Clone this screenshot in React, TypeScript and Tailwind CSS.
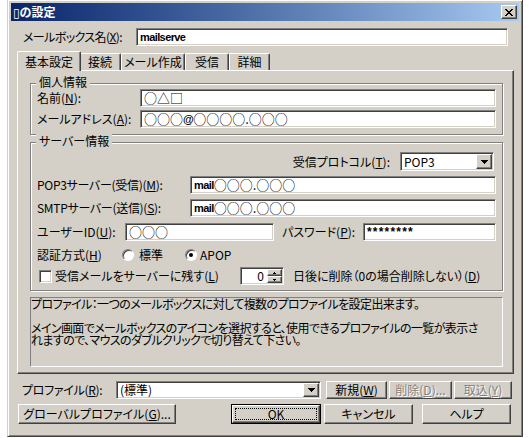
import React from "react";

const raised =
  "border border-t-white border-l-white border-r-[#404040] border-b-[#404040] shadow-[inset_-1px_-1px_0_#808080] bg-[#d4d0c8]";
const sunken =
  "border border-t-[#808080] border-l-[#808080] border-r-white border-b-white shadow-[inset_1px_1px_0_#404040,inset_-1px_-1px_0_#d4d0c8]";

function U({ children }: { children: React.ReactNode }) {
  return <span className="underline underline-offset-1">{children}</span>;
}

function DownArrow() {
  return (
    <svg width="7" height="4" viewBox="0 0 7 4" shapeRendering="crispEdges">
      <path d="M0 0h7v1H0zM1 1h5v1H1zM2 2h3v1H2zM3 3h1v1H3z" fill="#000" />
    </svg>
  );
}

function CloseGlyph() {
  return (
    <svg width="8" height="7" viewBox="0 0 8 7" shapeRendering="crispEdges">
      <path
        d="M0 0h2v1H0zM6 0h2v1H6zM1 1h2v1H1zM5 1h2v1H5zM2 2h4v1H2zM3 3h2v1H3zM2 4h4v1H2zM1 5h2v1H1zM5 5h2v1H5zM0 6h2v1H0zM6 6h2v1H6z"
        fill="#000"
      />
    </svg>
  );
}

function TextBox({ w, children }: { w: string; children?: React.ReactNode }) {
  return (
    <div className={`${sunken} ${w} h-[18px] bg-white flex items-center pl-[3px] whitespace-nowrap overflow-hidden leading-[14px]`}>
      {children}
    </div>
  );
}

function Combo({ w, h, children }: { w: string; h: string; children: React.ReactNode }) {
  return (
    <div className={`${sunken} ${w} ${h} bg-white flex items-center p-px`}>
      <span className="flex-1 pl-[2px] whitespace-nowrap leading-[14px]">{children}</span>
      <div className={`${raised} w-[16px] h-full flex items-center justify-center`}>
        <DownArrow />
      </div>
    </div>
  );
}

function Btn({
  w,
  h,
  children,
  disabled,
}: {
  w: string;
  h: string;
  children: React.ReactNode;
  disabled?: boolean;
}) {
  return (
    <div className={`${raised} ${w} ${h} flex items-center justify-center whitespace-nowrap leading-[14px]`}>
      <span className={disabled ? "text-[#808080] [text-shadow:1px_1px_0_#fff]" : ""}>{children}</span>
    </div>
  );
}

function Group({ title, className, children }: { title: string; className: string; children: React.ReactNode }) {
  return (
    <div className={`relative border border-[#808080] shadow-[inset_1px_1px_0_#fff,1px_1px_0_#fff] ${className}`}>
      <span className="absolute left-[5px] top-[-9px] px-[3px] bg-[#d4d0c8] leading-[14px]">{title}</span>
      {children}
    </div>
  );
}

function Radio({ checked }: { checked?: boolean }) {
  return (
    <div className="w-[12px] h-[12px] rounded-full bg-white border border-t-[#808080] border-l-[#808080] border-r-white border-b-white shadow-[inset_1px_1px_0_#404040] flex items-center justify-center">
      {checked && <div className="w-[4px] h-[4px] rounded-full bg-black" />}
    </div>
  );
}

function SpinArrow({ up }: { up?: boolean }) {
  return (
    <svg width="3" height="2" viewBox="0 0 3 2" shapeRendering="crispEdges">
      <path d={up ? "M1 0h1v1H1zM0 1h3v1H0z" : "M0 0h3v1H0zM1 1h1v1H1z"} fill="#000" />
    </svg>
  );
}

const sym = "text-[13px] [font-feature-settings:normal]";
const narrow = "font-['Liberation_Sans',sans-serif] font-bold text-[11px] tracking-[-0.6px]";

const tabs = [
  { label: "基本設定", w: "w-[64px]", sel: true },
  { label: "接続", w: "w-[42px]" },
  { label: "メール作成", w: "w-[64px]" },
  { label: "受信", w: "w-[44px]" },
  { label: "詳細", w: "w-[41px]" },
];

export default function App() {
  return (
    <div className="w-[530px] h-[438px] bg-white overflow-hidden font-['Noto_Sans_CJK_JP','DejaVu_Sans',sans-serif] text-[12px] leading-[14px] text-black [font-feature-settings:'palt']">
      <div className="ml-[7px] -mt-px w-[516px] h-[438px] bg-[#d4d0c8] border border-t-[#d4d0c8] border-l-[#d4d0c8] border-r-[#404040] border-b-[#404040] shadow-[inset_1px_1px_0_#fff,inset_-1px_-1px_0_#808080] p-[3px] flex flex-col">
        {/* title bar */}
        <div className="h-[18px] flex items-center bg-linear-to-r from-[#0a246a] to-[#a6caf0] px-[2px]">
          <span className="text-white font-bold leading-[14px]">▯の設定</span>
          <div className={`${raised} ml-auto w-[16px] h-[14px] flex items-center justify-center`}>
            <CloseGlyph />
          </div>
        </div>

        {/* mailbox name */}
        <div className="mt-[7px] h-[18px] flex items-center">
          <span className="pl-[12px] w-[125px] tracking-[-0.6px]">
            メールボックス名(<U>X</U>):
          </span>
          <TextBox w="w-[372px]">
            <span className={narrow}>mailserve</span>
          </TextBox>
        </div>

        {/* tabs */}
        <div className="mt-[5px] ml-[8px] h-[19px] flex items-end">
          {tabs.map((t) =>
            t.sel ? (
              <div
                key={t.label}
                className={`relative z-10 -ml-[2px] -mr-[2px] -mb-px h-[20px] ${t.w} bg-[#d4d0c8] border-t border-l border-r border-t-white border-l-white border-r-[#404040] shadow-[inset_-1px_0_0_#808080] rounded-t-[2px] flex items-center justify-center`}
              >
                {t.label}
              </div>
            ) : (
              <div
                key={t.label}
                className={`h-[17px] ${t.w} border-t border-l border-r border-t-white border-l-white border-r-[#404040] shadow-[inset_-1px_0_0_#808080] rounded-t-[2px] flex items-center justify-center`}
              >
                {t.label}
              </div>
            )
          )}
        </div>

        {/* tab panel */}
        <div className="relative ml-[6px] w-[497px] h-[304px] border border-t-white border-l-white border-r-[#404040] border-b-[#404040] shadow-[inset_-1px_-1px_0_#808080] pl-[12px] pt-[12px]">
          <Group title="個人情報" className="w-[473px] h-[52px] pl-[6px] pt-[5px]">
            <div className="h-[18px] flex items-center">
              <span className="w-[103px]">
                名前(<U>N</U>):
              </span>
              <TextBox w="w-[356px]">
                <span className={sym}>○△□</span>
              </TextBox>
            </div>
            <div className="mt-[3px] h-[18px] flex items-center">
              <span className="w-[103px]">
                メールアドレス(<U>A</U>):
              </span>
              <TextBox w="w-[356px]">
                <span className={sym}>○○○</span>
                <span className={narrow}>@</span>
                <span className={sym}>○○○○.○○○</span>
              </TextBox>
            </div>
          </Group>

          <Group title="サーバー情報" className="mt-[7px] w-[473px] h-[149px] pl-[6px] pt-[9px]">
            <div className="h-[19px] flex items-center justify-end pr-[8px]">
              <span>
                受信プロトコル(<U>T</U>):
              </span>
              <div className="ml-[10px]">
                <Combo w="w-[94px]" h="h-[19px]">POP3</Combo>
              </div>
            </div>
            <div className="mt-[5px] h-[18px] flex items-center">
              <span className="w-[153px] tracking-[-0.3px]">
                POP3サーバー(受信)(<U>M</U>):
              </span>
              <TextBox w="w-[306px]">
                <span className={narrow}>mail</span>
                <span className={sym}>○○○.○○○</span>
              </TextBox>
            </div>
            <div className="mt-[5px] h-[18px] flex items-center">
              <span className="w-[153px] tracking-[-0.3px]">
                SMTPサーバー(送信)(<U>S</U>):
              </span>
              <TextBox w="w-[306px]">
                <span className={narrow}>mail</span>
                <span className={sym}>○○○.○○○</span>
              </TextBox>
            </div>
            <div className="mt-[6px] h-[18px] flex items-center">
              <span className="w-[88px]">
                ユーザーID(<U>U</U>):
              </span>
              <TextBox w="w-[149px]">
                <span className={sym}>○○○</span>
              </TextBox>
              <span className="ml-[8px] w-[81px]">
                パスワード(<U>P</U>):
              </span>
              <TextBox w="w-[133px]">
                <span className="font-['Liberation_Sans',sans-serif] font-bold tracking-[1.2px]">********</span>
              </TextBox>
            </div>
            <div className="mt-[6px] h-[16px] flex items-center">
              <span className="w-[85px]">
                認証方式(<U>H</U>)
              </span>
              <div className="w-[63px] flex items-center">
                <Radio />
                <span className="ml-[5px]">標準</span>
              </div>
              <Radio checked />
              <span className="ml-[3px]">APOP</span>
            </div>
            <div className="mt-[4px] h-[18px] flex items-center">
              <div className={`${sunken} ml-[2px] w-[13px] h-[13px] bg-white`} />
              <span className="ml-[3px] w-[185px]">
                受信メールをサーバーに残す(<U>L</U>)
              </span>
              <div className={`${sunken} w-[44px] h-[18px] bg-white flex p-px`}>
                <span className="flex-1 text-right pr-[3px] leading-[14px]">0</span>
                <div className="w-[15px] flex flex-col">
                  <div className={`${raised} flex-1 flex items-center justify-center`}>
                    <SpinArrow up />
                  </div>
                  <div className={`${raised} flex-1 flex items-center justify-center`}>
                    <SpinArrow />
                  </div>
                </div>
              </div>
              <span className="ml-[9px]">
                日後に削除（0の場合削除しない）(<U>D</U>)
              </span>
            </div>
          </Group>

          <div className="mt-[6px] w-[473px] h-[70px] border border-t-[#808080] border-l-[#808080] border-r-white border-b-white leading-[12px] tracking-[-0.6px] whitespace-nowrap">
            <div>プロファイル：一つのメールボックスに対して複数のプロファイルを設定出来ます。</div>
            <div>&nbsp;</div>
            <div>メイン画面でメールボックスのアイコンを選択すると、使用できるプロファイルの一覧が表示さ</div>
            <div>れますので、マウスのダブルクリックで切り替えて下さい。</div>
          </div>
        </div>

        {/* profile row */}
        <div className="mt-[7px] h-[18px] flex items-center">
          <span className="pl-[11px] w-[105px] tracking-[-0.3px]">
            プロファイル(<U>R</U>):
          </span>
          <Combo w="w-[205px]" h="h-[18px]">(標準)</Combo>
          <div className="ml-[5px]">
            <Btn w="w-[61px]" h="h-[18px]">
              新規(<U>W</U>)
            </Btn>
          </div>
          <div className="ml-[2px]">
            <Btn w="w-[63px]" h="h-[18px]" disabled>
              削除(<U>D</U>)...
            </Btn>
          </div>
          <div className="ml-[2px]">
            <Btn w="w-[58px]" h="h-[18px]" disabled>
              取込(<U>Y</U>)
            </Btn>
          </div>
        </div>

        {/* bottom buttons */}
        <div className="mt-[5px] h-[20px] flex items-center">
          <div className="ml-[7px]">
            <Btn w="w-[158px]" h="h-[20px]">
              グローバルプロファイル(<U>G</U>)...
            </Btn>
          </div>
          <div className="ml-[55px] w-[90px] h-[20px] border border-black">
            <div className={`${raised} w-full h-full p-[2px]`}>
              <div className="w-full h-full border border-dotted border-black flex items-center justify-center leading-[12px]">
                OK
              </div>
            </div>
          </div>
          <div className="ml-[3px]">
            <Btn w="w-[89px]" h="h-[20px]">キャンセル</Btn>
          </div>
          <div className="ml-[9px]">
            <Btn w="w-[89px]" h="h-[20px]">ヘルプ</Btn>
          </div>
        </div>
      </div>
    </div>
  );
}
